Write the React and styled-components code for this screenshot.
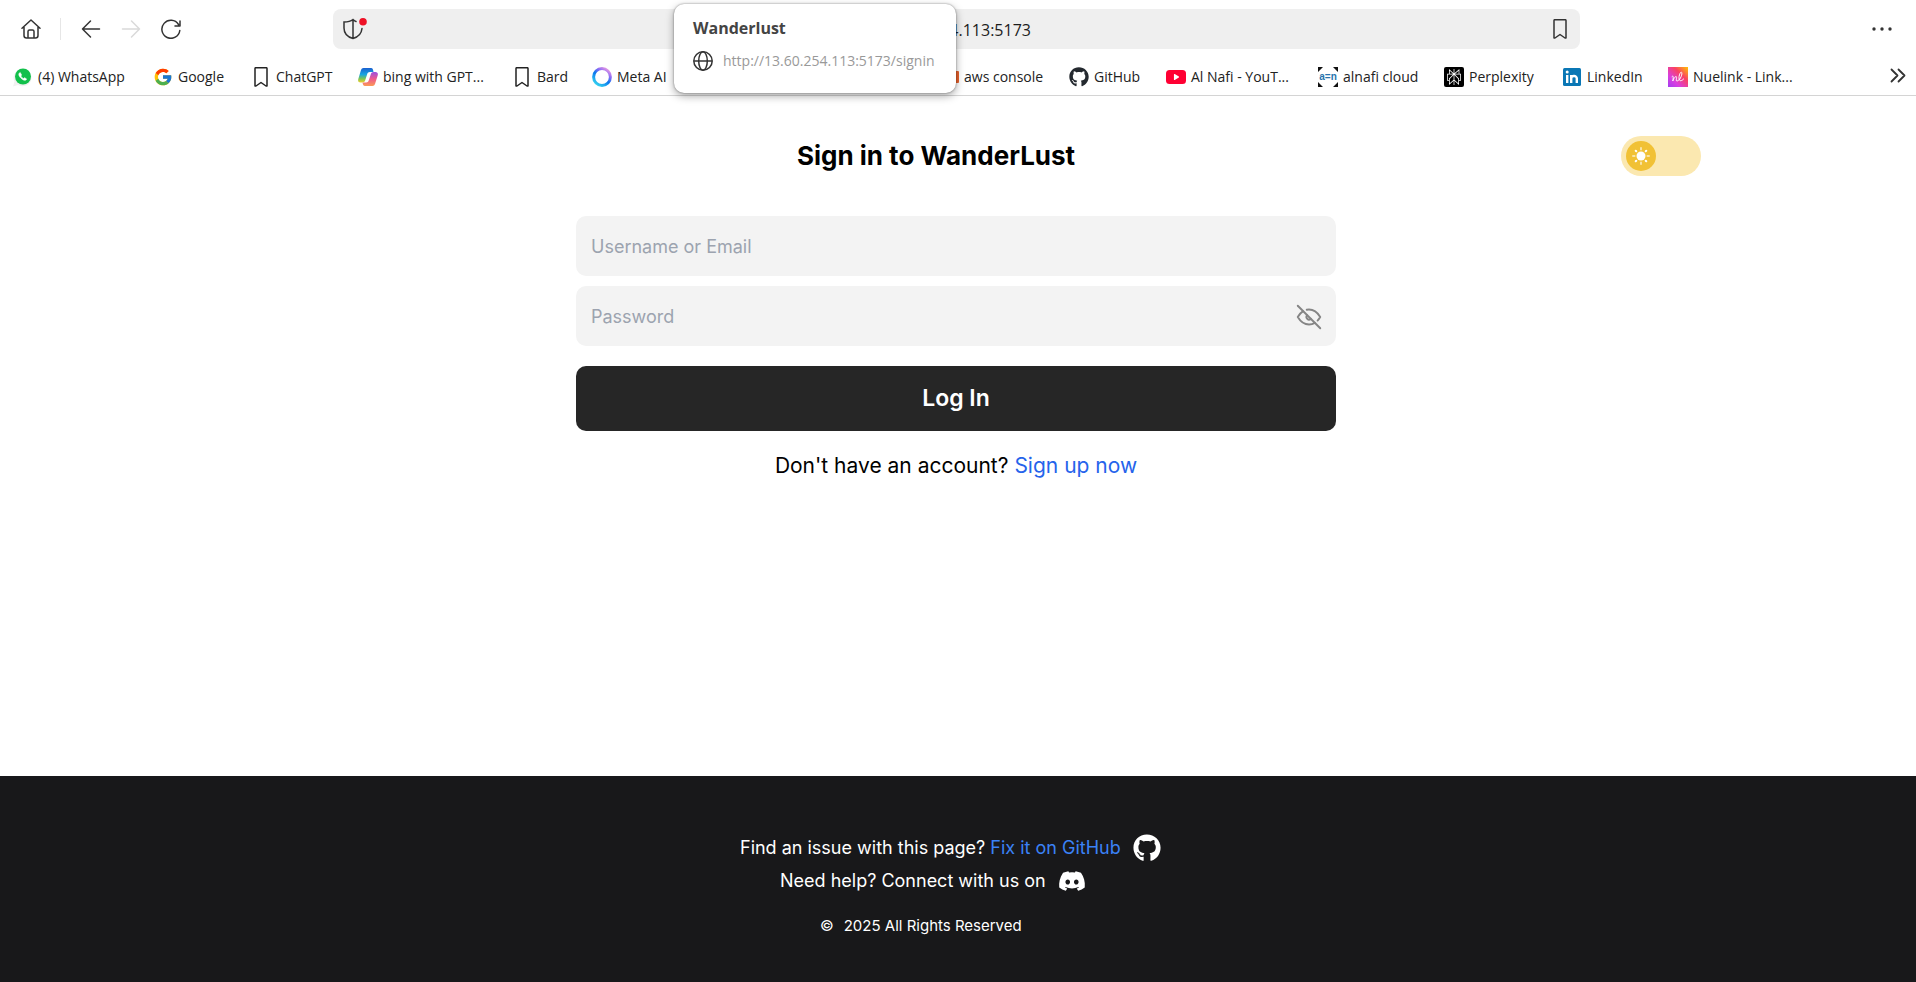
import React, { useState } from "react";
import styled, { createGlobalStyle } from "styled-components";
import { FaGithub, FaDiscord, FaPlay } from "react-icons/fa";
import { FcGoogle } from "react-icons/fc";
import { SiPerplexity } from "react-icons/si";
import { TbEyeOff } from "react-icons/tb";

const uiFont = `"Open Sans", "Noto Sans", sans-serif`;
const pageFont = `Inter, Roboto, sans-serif`;

const GlobalStyle = createGlobalStyle`
  * { box-sizing: border-box; }
  body { margin: 0; background: #fff; }
  button, input { font: inherit; }
`;

const Screen = styled.div`
  min-height: 100vh;
  display: flex;
  flex-direction: column;
  position: relative;
`;

/* Browser chrome */
const Chrome = styled.div`
  font-family: ${uiFont};
  color: #222;
  border-bottom: 1px solid #d4d4d4;
`;

const Toolbar = styled.div`
  height: 58px;
  display: flex;
  align-items: center;
  padding: 0 19px 0 21px;
`;

const NavGroup = styled.nav`
  flex: 1;
  display: flex;
  align-items: center;
  gap: 20px;
`;

const IconButton = styled.button`
  display: flex;
  padding: 0;
  border: 0;
  background: none;
  color: ${(p) => (p.$muted ? "#d9d9d9" : "#333")};
  cursor: pointer;
`;

const Divider = styled.span`
  width: 1px;
  height: 22px;
  margin-left: -1px;
  background: #e6e6e6;
`;

const AddressBar = styled.div`
  width: 66.5%;
  height: 40px;
  display: flex;
  align-items: center;
  justify-content: space-between;
  gap: 10px;
  padding: 0 10px;
  border-radius: 8px;
  background: #efefef;
`;

const AddressInput = styled.input`
  flex: 1;
  min-width: 0;
  padding: 2px 0 0;
  border: 0;
  outline: 0;
  background: none;
  text-align: center;
  font-size: 16px;
  color: #1c1c1c;
`;

const MenuGroup = styled.div`
  flex: 1;
  display: flex;
  justify-content: flex-end;
  padding-right: 5px;
`;

const Bookmarks = styled.div`
  height: 37px;
  display: flex;
  align-items: center;
  padding: 0 9px 0 13px;
`;

const BookmarkLink = styled.a`
  flex: 0 1 ${(p) => p.$width}px;
  min-width: 0;
  display: flex;
  align-items: center;
  gap: 5px;
  font-size: 14px;
  line-height: 20px;
  white-space: nowrap;
  color: #222;
  text-decoration: none;
  svg { flex: none; }
`;

const Overflow = styled(IconButton)`
  margin-left: auto;
`;

const TabCard = styled.div`
  position: absolute;
  top: 4px;
  left: calc(50% - 284px);
  width: 282px;
  height: 89px;
  padding: 11px 19px;
  border-radius: 10px;
  background: #fff;
  font-family: ${uiFont};
  box-shadow: 0 0 2px rgba(0, 0, 0, 0.45), 0 3px 8px rgba(0, 0, 0, 0.35);
`;

const TabTitle = styled.div`
  font-size: 16px;
  line-height: 26px;
  font-weight: 700;
  color: #444;
`;

const TabUrl = styled.div`
  display: flex;
  align-items: center;
  gap: 10px;
  margin-top: 8px;
  font-size: 14px;
  line-height: 24px;
  color: #999;
  white-space: nowrap;
  svg { flex: none; }
`;

/* Sign-in page */
const Main = styled.main`
  flex: 1;
  padding-right: 4px;
  font-family: ${pageFont};
  color: #000;
`;

const Header = styled.header`
  display: flex;
  align-items: center;
  padding: 40px 211px 40px 251px;
`;

const Title = styled.h1`
  flex: 1;
  margin: 0;
  text-align: center;
  font-size: 26px;
  line-height: 40px;
  font-weight: 700;
`;

const Switch = styled.label`
  display: flex;
  width: 80px;
  height: 40px;
  padding: 5px;
  border-radius: 20px;
  background: #fbe8b0;
  cursor: pointer;
`;

const HiddenCheck = styled.input`
  appearance: none;
  width: 0;
  height: 0;
  margin: 0;
`;

const Knob = styled.span`
  display: flex;
  align-items: center;
  justify-content: center;
  width: 30px;
  height: 30px;
  margin-left: ${(p) => (p.$on ? "40px" : "0")};
  border-radius: 50%;
  background: #f1c135;
`;

const Form = styled.form`
  width: 760px;
  max-width: 100%;
  margin: 0 auto;
  display: flex;
  flex-direction: column;
  gap: 10px;
`;

const Field = styled.label`
  height: 60px;
  display: flex;
  align-items: center;
  padding: 1px 12px 0 15px;
  border-radius: 10px;
  background: #f3f3f3;
`;

const TextInput = styled.input`
  flex: 1;
  min-width: 0;
  padding: 1px 0 0;
  border: 0;
  outline: 0;
  background: none;
  font-size: 18px;
  line-height: 28px;
  &::placeholder { color: #9ca3af; opacity: 1; }
`;

const EyeButton = styled(IconButton)`
  color: #858585;
`;

const Submit = styled.button`
  height: 65px;
  margin-top: 10px;
  padding: 0 0 2px;
  border: 0;
  border-radius: 10px;
  background: #262626;
  color: #fff;
  font-size: 23px;
  font-weight: 600;
  cursor: pointer;
`;

const Prompt = styled.p`
  margin: 10px 0 0;
  text-align: center;
  font-size: 21px;
  line-height: 30px;
`;

const TextLink = styled.a`
  color: ${(p) => (p.$bright ? "#3b82f6" : "#2563eb")};
  text-decoration: none;
`;

const Footer = styled.footer`
  height: 206px;
  display: flex;
  justify-content: center;
  padding: 55px 4px 0 0;
  background: #18181a;
  color: #fff;
  font-family: ${pageFont};
`;

const FooterLines = styled.div`
  width: 432px;
  display: flex;
  flex-direction: column;
  white-space: nowrap;
`;

const FooterLine = styled.div`
  display: flex;
  align-items: center;
  gap: ${(p) => (p.$small ? "10px" : "12px")};
  height: ${(p) => (p.$small ? "57px" : "33px")};
  margin-left: ${(p) => p.$indent}px;
  font-size: ${(p) => (p.$small ? "15px" : "18px")};
`;

const SocialLink = styled.a`
  display: flex;
  color: #fff;
`;

const Stroke = ({ size = 20, w = 1.5, children }) => (
  <svg width={size} height={size} viewBox="0 0 20 20" fill="none" stroke="currentColor"
    strokeWidth={w} strokeLinecap="round" strokeLinejoin="round" aria-hidden="true">
    {children}
  </svg>
);

const HomeIcon = () => (
  <Stroke>
    <path d="M1 9.2 10 1l9 8.2M3 8v8.5A2.5 2.5 0 0 0 5.500 19h9a2.500 2.500 0 0 0 2.500-2.500V8M7 19v-6.500a1.500 1.500 0 0 1 1.500-1.500h3a1.500 1.500 0 0 1 1.500 1.500V19" />
  </Stroke>
);
const ArrowIcon = ({ right }) => (
  <Stroke>
    {right ? <path d="M1.500 10h17M10.500 2l8 8-8 8" /> : <path d="M18.500 10h-17M9.500 2l-8 8 8 8" />}
  </Stroke>
);
const ReloadIcon = () => (
  <Stroke><path d="M18.800 11.500A9 9 0 1 1 17.500 5.500M19 2v5h-5" /></Stroke>
);
const ShieldIcon = () => (
  <svg width="24" height="22" viewBox="0 0 24 22" fill="none" stroke="#333" strokeWidth="1.500" strokeLinecap="round">
    <path d="M13 3.500C12 3.200 11 2.400 10 1.500 7.500 3.500 4 4 1 4v6c0 5 3.500 9 9 10.500 5.500-1.500 8.500-5 9-10M10 1.500v19" />
    <circle cx="20" cy="3.800" r="3.800" fill="#ee1126" stroke="none" />
  </svg>
);
const FlagIcon = () => (
  <Stroke><path d="M4 1.500a.8.8 0 0 1 .8-.8h10.400a.8.8 0 0 1 .8.8V19h-1l-5-3.500L5 19H4z" /></Stroke>
);
const DotsIcon = () => (
  <svg width="20" height="4" viewBox="0 0 20 4" fill="currentColor">
    <circle cx="2" cy="2" r="1.700" /><circle cx="10" cy="2" r="1.700" /><circle cx="18" cy="2" r="1.700" />
  </svg>
);
const ChevronsIcon = () => (
  <Stroke w={1.800}><path d="M4.500 2.500l6 6-6 6M11.500 2.500l6 6-6 6" /></Stroke>
);
const GlobeIcon = () => (
  <svg width="20" height="20" viewBox="0 0 20 20" fill="none" stroke="#333" strokeWidth="1.500">
    <circle cx="10" cy="10" r="9.200" /><ellipse cx="10" cy="10" rx="4.300" ry="9.200" /><path d="M1 10h18" />
  </svg>
);
const WhatsAppIcon = () => (
  <svg width="20" height="20" viewBox="0 0 20 20">
    <path d="M0 19.500l1.500-5a9 8.500 0 1 1 3.500 3.500z" fill="#f1f1f1" />
    <circle cx="10" cy="9.500" r="8" fill="#12c04b" />
    <path d="M7.200 5.500c-2.200 1-1.500 3.500.8 5.700s4.800 2.800 5.600.8l-2-1.300-1 .9c-1.300-.4-2.300-1.400-2.800-2.600l.8-1z" fill="#fff" stroke="#fff" strokeLinejoin="round" strokeWidth=".6" />
  </svg>
);
const CopilotIcon = () => (
  <svg width="20" height="20" viewBox="0 0 20 20">
    <defs>
      <linearGradient id="cpA" x1="0" y1="0" x2="0" y2="1">
        <stop offset="0" stopColor="#1a5fd0" /><stop offset=".45" stopColor="#18a6e0" />
        <stop offset=".75" stopColor="#7fc650" /><stop offset="1" stopColor="#f3cf2c" />
      </linearGradient>
      <linearGradient id="cpB" x1="0" y1="0" x2="0" y2="1">
        <stop offset="0" stopColor="#9a4fe0" /><stop offset=".5" stopColor="#ef5a8c" /><stop offset="1" stopColor="#fb9a55" />
      </linearGradient>
    </defs>
    <path d="M5.500 1H13c1.800 0 2 1.500 2.500 4H12c-2 0-2.500 1-3 2.700L7.300 13c-.4 1.500-1 2.500-3 2.500H2.500C.5 15.500-.3 14 .3 12L3 3c.5-1.300 1.200-2 2.500-2z" fill="url(#cpA)" />
    <path d="M14.500 19H7c-1.800 0-2-1.500-2.500-3.500H8c2 0 2.500-1.200 3-2.700L12.700 7.500C13.100 6 13.700 5 15.700 5h1.800c2 0 2.800 1.500 2.200 3.500L17 17c-.5 1.300-1.200 2-2.500 2z" fill="url(#cpB)" />
  </svg>
);
const MetaIcon = () => (
  <svg width="20" height="20" viewBox="0 0 20 20">
    <defs>
      <linearGradient id="meta" x1=".9" y1="0" x2=".2" y2="1">
        <stop offset="0" stopColor="#f3a0e0" /><stop offset=".3" stopColor="#8d6cf5" />
        <stop offset=".55" stopColor="#0a78ee" /><stop offset="1" stopColor="#35d3f0" />
      </linearGradient>
    </defs>
    <circle cx="10" cy="10" r="8.400" fill="none" stroke="url(#meta)" strokeWidth="3" />
  </svg>
);
const AwsIcon = () => (
  <svg width="20" height="20" viewBox="0 0 20 20"><rect y="4" width="20" height="12" rx="1" fill="#e8622c" /></svg>
);
const YouTubeIcon = () => (
  <svg width="20" height="20" viewBox="0 0 20 20">
    <rect y="3" width="20" height="14" rx="3.500" fill="#ff0033" />
    <FaPlay x="7.500" y="7" size={6} color="#fff" />
  </svg>
);
const AlnafiIcon = () => (
  <svg width="20" height="20" viewBox="0 0 20 20">
    <path d="M0 0h5L0 5zM20 0h-5l5 5zM0 20h5l-5-5zM20 20h-5l5-5z" fill="#111" />
    <text x="10" y="12.500" textAnchor="middle" fontFamily="Liberation Sans, sans-serif" fontWeight="700" fontSize="10" fill="#2874ad">a=n</text>
  </svg>
);
const PerplexityIcon = () => (
  <svg width="20" height="20" viewBox="0 0 20 20">
    <rect width="20" height="20" rx="2" fill="#000" />
    <SiPerplexity x="2" y="2" size={16} color="#fff" />
  </svg>
);
const LinkedInIcon = () => (
  <svg width="20" height="20" viewBox="0 0 20 20">
    <rect x="1" y="1" width="18" height="18" rx="1.500" fill="#0a77b5" />
    <path d="M5.200 8v8M9.200 16V8M9.200 11.500c0-3.200 5.600-3.500 5.600 0V16" fill="none" stroke="#fff" strokeWidth="2.400" />
    <circle cx="5.200" cy="5" r="1.500" fill="#fff" />
  </svg>
);
const NuelinkIcon = () => (
  <svg width="20" height="20" viewBox="0 0 20 20">
    <defs>
      <linearGradient id="nue" x1="0" y1="1" x2="1" y2="0">
        <stop offset="0" stopColor="#a33df0" /><stop offset=".3" stopColor="#d93fe0" />
        <stop offset=".65" stopColor="#fa4262" /><stop offset="1" stopColor="#ffc400" />
      </linearGradient>
    </defs>
    <rect width="20" height="20" fill="url(#nue)" />
    <path d="M4 9.500c1.500-1.500 1.500 1 .8 4.500.8-3 3.800-6 3.800-3.500 0 1.500-1 3.500.4 3.500 2.200 0 5.500-5.500 4.800-8.300-1-2.200-3.300 3-2.700 6.300.5 2.500 2.500 2.200 4.500 0" fill="none" stroke="#fff" strokeWidth="1" strokeLinecap="round" />
  </svg>
);
const SunIcon = () => (
  <svg width="18" height="18" viewBox="0 0 18 18" stroke="#fff" strokeLinecap="round">
    <circle cx="9" cy="9" r="4.500" fill="#fff" stroke="none" />
    <path d="M9 .8v2M9 15.200v2M.8 9h2M15.200 9h2" strokeWidth="1.500" opacity=".75" />
    <path d="M3.700 3.700l.6.6M13.700 13.700l.6.6M3.700 14.300l.6-.6M13.700 4.300l.6-.6" strokeWidth="2" />
  </svg>
);

const bookmarks = [
  { label: "(4) WhatsApp", icon: <WhatsAppIcon />, width: 140 },
  { label: "Google", icon: <FcGoogle size={20} />, width: 98 },
  { label: "ChatGPT", icon: <FlagIcon />, width: 107 },
  { label: "bing with GPT...", icon: <CopilotIcon />, width: 154 },
  { label: "Bard", icon: <FlagIcon />, width: 80 },
  { label: "Meta AI", icon: <MetaIcon />, width: 347 },
  { label: "aws console", icon: <AwsIcon />, width: 130 },
  { label: "GitHub", icon: <FaGithub size={20} color="#24292f" />, width: 97 },
  { label: "Al Nafi - YouT...", icon: <YouTubeIcon />, width: 152 },
  { label: "alnafi cloud", icon: <AlnafiIcon />, width: 126 },
  { label: "Perplexity", icon: <PerplexityIcon />, width: 118 },
  { label: "LinkedIn", icon: <LinkedInIcon />, width: 106 },
  { label: "Nuelink - Link...", icon: <NuelinkIcon />, width: 140 },
];

export default function App() {
  const [dark, setDark] = useState(false);
  const [visible, setVisible] = useState(false);
  return (
    <Screen>
      <GlobalStyle />
      <Chrome>
        <Toolbar>
          <NavGroup aria-label="Browser">
            <IconButton aria-label="Home"><HomeIcon /></IconButton>
            <Divider />
            <IconButton aria-label="Back"><ArrowIcon /></IconButton>
            <IconButton aria-label="Forward" $muted><ArrowIcon right /></IconButton>
            <IconButton aria-label="Reload"><ReloadIcon /></IconButton>
          </NavGroup>
          <AddressBar>
            <IconButton aria-label="Site protection"><ShieldIcon /></IconButton>
            <AddressInput aria-label="Address" defaultValue="13.60.254.113:5173" />
            <IconButton aria-label="Bookmark this page"><FlagIcon /></IconButton>
          </AddressBar>
          <MenuGroup>
            <IconButton aria-label="Menu"><DotsIcon /></IconButton>
          </MenuGroup>
        </Toolbar>
        <Bookmarks>
          {bookmarks.map((b) => (
            <BookmarkLink key={b.label} href="#" $width={b.width}>
              {b.icon}
              {b.label}
            </BookmarkLink>
          ))}
          <Overflow aria-label="More bookmarks"><ChevronsIcon /></Overflow>
        </Bookmarks>
      </Chrome>
      <TabCard role="tooltip">
        <TabTitle>Wanderlust</TabTitle>
        <TabUrl><GlobeIcon />http://13.60.254.113:5173/signin</TabUrl>
      </TabCard>
      <Main>
        <Header>
          <Title>Sign in to WanderLust</Title>
          <Switch>
            <HiddenCheck type="checkbox" aria-label="Dark mode" checked={dark} onChange={() => setDark(!dark)} />
            <Knob $on={dark}><SunIcon /></Knob>
          </Switch>
        </Header>
        <Form onSubmit={(e) => e.preventDefault()}>
          <Field>
            <TextInput type="text" aria-label="Username or Email" placeholder="Username or Email" />
          </Field>
          <Field>
            <TextInput type={visible ? "text" : "password"} aria-label="Password" placeholder="Password" />
            <EyeButton type="button" aria-label="Show password" onClick={() => setVisible(!visible)}>
              <TbEyeOff size={30} strokeWidth={1.5} />
            </EyeButton>
          </Field>
          <Submit type="submit">Log In</Submit>
          <Prompt>Don't have an account? <TextLink href="#">Sign up now</TextLink></Prompt>
        </Form>
      </Main>
      <Footer>
        <FooterLines>
          <FooterLine $indent={0}>
            <span>Find an issue with this page? <TextLink $bright href="#">Fix it on GitHub</TextLink></span>
            <SocialLink href="#" aria-label="GitHub"><FaGithub size={28} /></SocialLink>
          </FooterLine>
          <FooterLine $indent={40}>
            <span>Need help? Connect with us on</span>
            <SocialLink href="#" aria-label="Discord"><FaDiscord size={28} /></SocialLink>
          </FooterLine>
          <FooterLine $indent={80} $small>
            <span>©</span>
            <span>2025 All Rights Reserved</span>
          </FooterLine>
        </FooterLines>
      </Footer>
    </Screen>
  );
}
